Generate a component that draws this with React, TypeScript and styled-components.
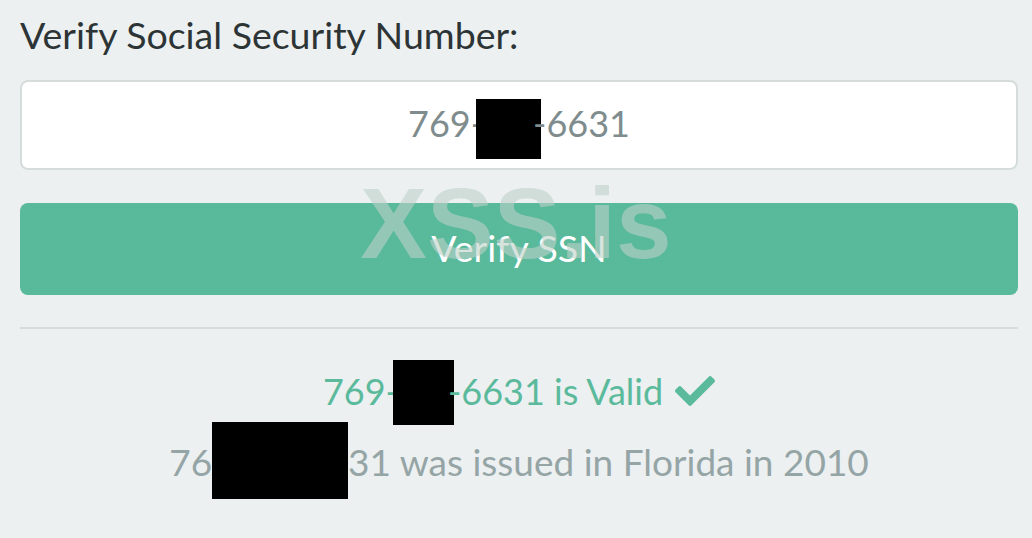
import styled, { createGlobalStyle } from "styled-components";
import { FaCheck } from "react-icons/fa";

const GlobalStyle = createGlobalStyle`
  html, body {
    margin: 0;
    padding: 0;
    background: #ecf0f1;
  }
  body {
    font-family: Lato, "Open Sans", sans-serif;
  }
`;

export default function App() {
  return (
    <>
      <GlobalStyle />
      <Page>
        <Title>Verify Social Security Number:</Title>
        <Field>
          <span>
            769-<Redact $w={65} $h={60} $drop={22} $ml={-8} $mr={-8} />-6631
          </span>
        </Field>
        <VerifyButton type="button">Verify SSN</VerifyButton>
        <Divider />
        <Result>
          <ValidLine>
            769-<Redact $w={61} $h={65} $drop={20} $ml={-6} $mr={-6} />-6631 is Valid
            <FaCheck className="check" />
          </ValidLine>
          <IssuedLine>
            76<Redact $w={136} $h={77} $drop={23} />31 was issued in Florida in 2010
          </IssuedLine>
        </Result>
        <Watermark>XSS.is</Watermark>
      </Page>
    </>
  );
}

const Page = styled.main`
  position: relative;
  display: flex;
  flex-direction: column;
  padding: 13px 14px 0 20px;
  min-height: 538px;
  box-sizing: border-box;
`;

const Title = styled.h1`
  margin: 0 0 23px;
  font-size: 37.5px;
  line-height: 44px;
  font-weight: 400;
  color: #2d3436;
`;

const Field = styled.div`
  height: 90px;
  box-sizing: border-box;
  display: flex;
  align-items: center;
  justify-content: center;
  padding-bottom: 3px;
  background: #fff;
  border: 2px solid #d5dddb;
  border-radius: 8px;
  font-size: 36px;
  line-height: 43px;
  color: #7f8c8d;
  white-space: pre;
`;

// black box laid over redacted digits; zero-height margin box keeps the line height
const Redact = styled.span<{ $w: number; $h: number; $drop: number; $ml?: number; $mr?: number }>`
  display: inline-block;
  width: ${(p) => p.$w}px;
  height: ${(p) => p.$h}px;
  margin: -${(p) => p.$h - p.$drop}px ${(p) => p.$mr ?? 0}px -${(p) => p.$drop}px ${(p) => p.$ml ?? 0}px;
  vertical-align: baseline;
  background: #000;
`;

const VerifyButton = styled.button`
  margin-top: 33px;
  height: 92px;
  border: none;
  border-radius: 8px;
  background: #59b99b;
  color: #fff;
  font-family: Lato, "Open Sans", sans-serif;
  font-size: 37.5px;
  padding: 0 0 4px;
  cursor: pointer;
`;

const Divider = styled.hr`
  margin: 32px 0 0;
  border: none;
  border-top: 2px solid #d5dddb;
`;

const Result = styled.section`
  display: flex;
  flex-direction: column;
  align-items: center;
  padding-top: 41px;
  gap: 27px;
  font-size: 36px;
  line-height: 43px;
`;

const ValidLine = styled.div`
  color: #5bba9c;
  white-space: pre;

  .check {
    width: 40px;
    height: 40px;
    margin-left: 12px;
    vertical-align: -6px;
  }
`;

const IssuedLine = styled.div`
  color: #95a5a6;
  font-size: 37px;
  white-space: pre;
`;

const Watermark = styled.div`
  position: absolute;
  top: 173px;
  left: 50%;
  transform: translateX(-50%);
  font-family: "Liberation Sans", Arial, sans-serif;
  font-weight: 700;
  font-size: 100px;
  line-height: 1;
  color: rgba(190, 208, 200, 0.6);
  pointer-events: none;
  white-space: nowrap;
`;
